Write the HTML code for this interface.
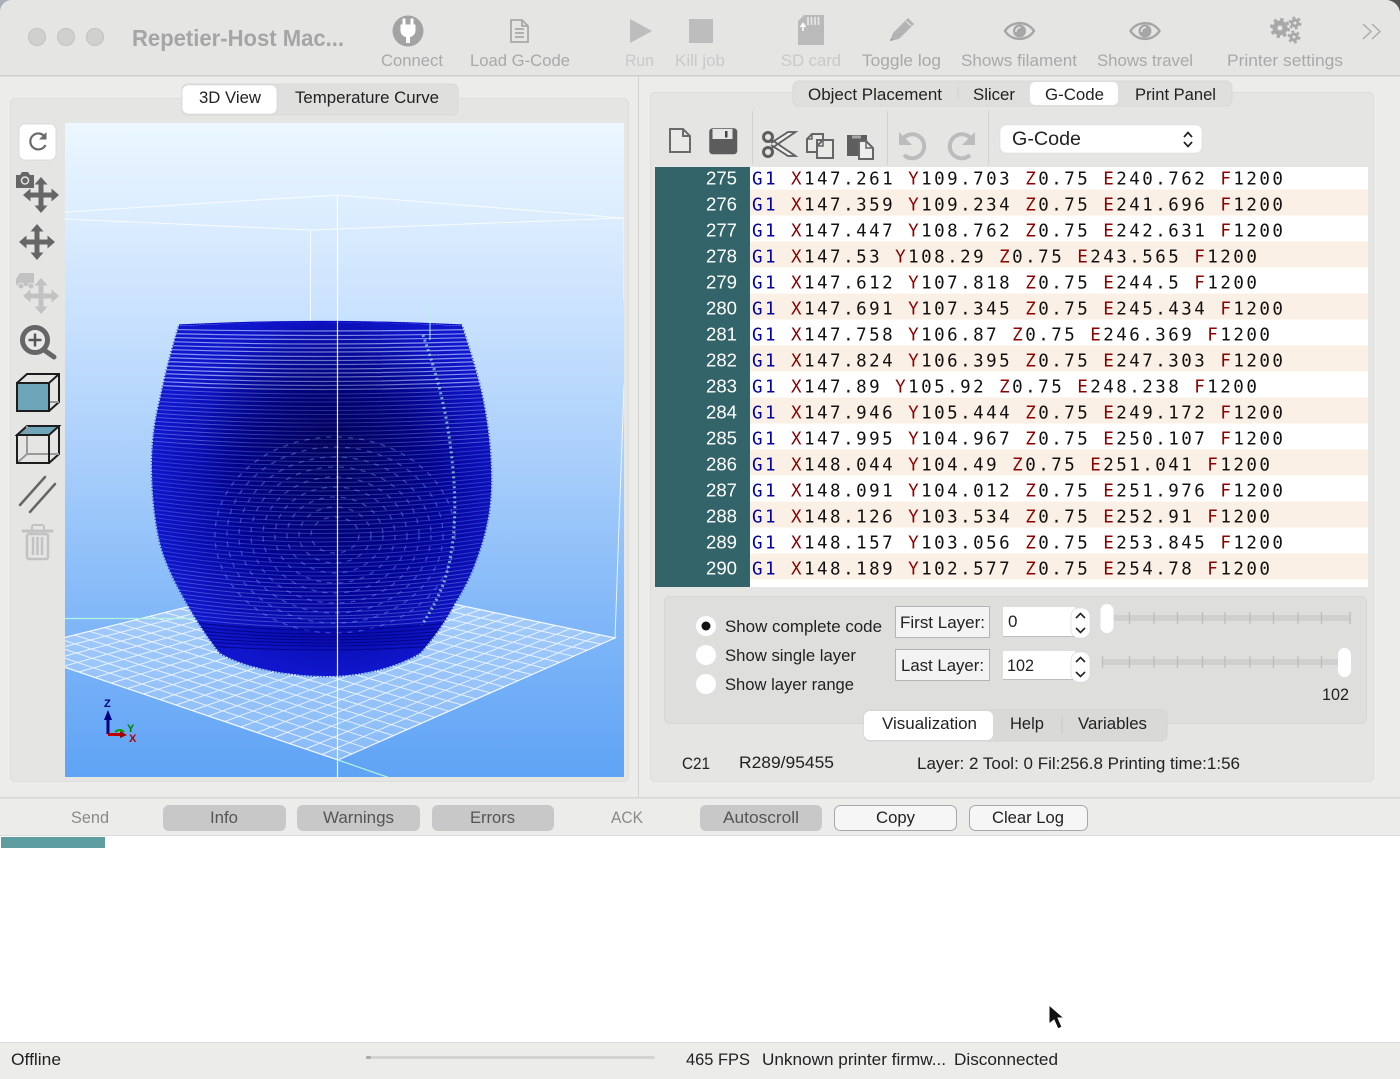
<!DOCTYPE html>
<html><head><meta charset="utf-8"><title>Repetier-Host Mac</title>
<style>
html,body{margin:0;padding:0;background:#ececea;width:1400px;height:1079px;overflow:hidden}
svg{display:block}
text{font-family:"Liberation Sans",Arial,sans-serif;font-size:17px;fill:#222}
.t{fill:#a9a9a9;font-size:17px}
.l{fill:#c9c9c9;font-size:17px}
.c text{font-family:"DejaVu Sans Mono","Liberation Mono",monospace;font-size:17.5px;letter-spacing:2.47px;fill:#111}
.c .b{fill:#0000a0}.c .r{fill:#8b0000}
.n text{font-size:18.5px;fill:#fff}
</style></head><body>
<svg width="1400" height="1079" viewBox="0 0 1400 1079" xmlns="http://www.w3.org/2000/svg">
<defs>
<linearGradient id="gl" x1="0" y1="0" x2="0" y2="1"><stop offset="0" stop-color="#ecf7ff"/><stop offset=".25" stop-color="#cfe5fe"/><stop offset=".5" stop-color="#abd0fb"/><stop offset=".75" stop-color="#82b8f8"/><stop offset="1" stop-color="#5fa3f5"/></linearGradient>
<radialGradient id="vb" gradientUnits="userSpaceOnUse" cx="335" cy="490" r="185"><stop offset="0" stop-color="#02027c"/><stop offset=".55" stop-color="#030396"/><stop offset="1" stop-color="#1016cc"/></radialGradient>
<radialGradient id="vd" gradientUnits="userSpaceOnUse" cx="330" cy="445" r="130"><stop offset="0" stop-color="#000040" stop-opacity=".6"/><stop offset="1" stop-color="#000040" stop-opacity="0"/></radialGradient>
<clipPath id="vc"><path d="M179 326Q320 318 462 326C468 345 478 375 483 400C489 430 492 460 491 490C490 515 485 535 478 555C470 578 463 590 455 603C445 622 432 640 420 653C395 668 360 676 327 676C290 676 245 668 220 653C208 638 196 620 185 600C175 582 168 568 162 550C155 525 152 495 152 467C152 440 155 420 160 400C165 375 173 345 179 326Z"/></clipPath>
<clipPath id="gv"><rect x="65" y="123" width="559" height="654"/></clipPath>
<path id="mv" d="M0-18L6.500-10.500H2.500V-2.500H10.500V-6.500L18 0L10.500 6.500V2.500H2.500V10.500H6.500L0 18L-6.500 10.500H-2.500V2.500H-10.500V6.500L-18 0L-10.500-6.500V-2.500H-2.500V-10.500H-6.500Z"/>
<g id="eye"><path d="M-14.500 0C-8-10.500 8-10.500 14.500 0C8 10.500-8 10.500-14.500 0Z" fill="none" stroke="#a6a6a6" stroke-width="2.400"/><circle r="6.500" fill="#a6a6a6"/><path d="M-3.500 1A4 4 0 0 1 1-3.500" fill="none" stroke="#e5e5e3" stroke-width="1.600"/></g>
</defs>

<!-- window -->
<rect width="1400" height="1079" fill="#ececea"/>
<path d="M0 0H12A12 12 0 0 0 0 12Z" fill="#a9b0b8"/><path d="M1400 0H1386A14 14 0 0 1 1400 14Z" fill="#555"/>
<path d="M0 14A14 14 0 0 1 14 0H1386A14 14 0 0 1 1400 14V75H0Z" fill="#e5e5e3"/>
<rect y="75" width="1400" height="1.500" fill="#cfcfcd"/>
<rect x="638" y="76" width="1" height="721" fill="#d2d2d0"/>

<!-- title bar -->
<g fill="#d0d0ce" stroke="#c2c2c0"><circle cx="37" cy="37" r="8.500"/><circle cx="66" cy="37" r="8.500"/><circle cx="95" cy="37" r="8.500"/></g>
<text x="132" y="46" style="font-size:23px;fill:#a5a5a5;font-weight:700" textLength="212" lengthAdjust="spacingAndGlyphs">Repetier-Host Mac...</text>
<circle cx="408" cy="31" r="15.500" fill="#a3a3a3"/>
<path d="M402.500 18.500h3v6h5v-6h3v6h2v6c0 4-3 6-5.500 6.500v6h-4v-6c-2.500-.5-5.500-2.500-5.500-6.500v-6h2z" fill="#fff"/>
<path d="M511 20h11l6 6v16h-17z M522 20v6h6 M515 29h9M515 33h9M515 37h9" fill="none" stroke="#a8a8a8" stroke-width="1.800"/>
<path d="M630 19L652 31L630 43Z" fill="#bdbdbd"/>
<rect x="689" y="19" width="24" height="24" fill="#bdbdbd"/>
<path d="M804 15H824V45H798V21Z" fill="#bababa"/><path d="M808 17v8M811.500 17v8M815 17v8M818.500 17v8" stroke="#e5e5e3" stroke-width="1.800"/><path d="M803 31v-6M800.500 27l2.500-3.500l2.500 3.500" fill="#fff" stroke="#fff" stroke-width="1.500"/>
<path d="M890 41L893 33L908 18L914 24L899 39Z" fill="#b3b3b3"/><path d="M890 41l1-2.500l1.500 1.500z" fill="#888"/><path d="M906 21l5 5" stroke="#e5e5e3" stroke-width="1.200"/>
<use href="#eye" x="1019.500" y="31"/><use href="#eye" x="1145" y="31"/>
<g fill="none" stroke="#a8a8a8"><circle cx="1280" cy="28" r="5" stroke-width="5"/><circle cx="1280" cy="28" r="8.500" stroke-width="3" stroke-dasharray="3.300 3.370"/><circle cx="1295" cy="23" r="3" stroke-width="3"/><circle cx="1295" cy="23" r="5.500" stroke-width="2" stroke-dasharray="2.900 2.860"/><circle cx="1294" cy="37" r="3" stroke-width="3"/><circle cx="1294" cy="37" r="5.500" stroke-width="2" stroke-dasharray="2.900 2.860"/></g>
<path d="M1363 24l8 7.500l-8 7.500M1372 24l8 7.500l-8 7.500" fill="none" stroke="#aeaeae" stroke-width="1.500"/>
<text class="t" x="381" y="66" textLength="62" lengthAdjust="spacingAndGlyphs">Connect</text>
<text class="t" x="470" y="66" textLength="100" lengthAdjust="spacingAndGlyphs">Load G-Code</text>
<text class="l" x="625" y="66" textLength="29" lengthAdjust="spacingAndGlyphs">Run</text>
<text class="l" x="675" y="66" textLength="50" lengthAdjust="spacingAndGlyphs">Kill job</text>
<text class="l" x="781" y="66" textLength="60" lengthAdjust="spacingAndGlyphs">SD card</text>
<text class="t" x="862" y="66" textLength="79" lengthAdjust="spacingAndGlyphs">Toggle log</text>
<text class="t" x="961" y="66" textLength="116" lengthAdjust="spacingAndGlyphs">Shows filament</text>
<text class="t" x="1097" y="66" textLength="96" lengthAdjust="spacingAndGlyphs">Shows travel</text>
<text class="t" x="1227" y="66" textLength="116" lengthAdjust="spacingAndGlyphs">Printer settings</text>

<!-- left panel -->
<rect x="10.500" y="98.500" width="618" height="683" rx="5" fill="#e5e5e3" stroke="#dddddb"/>
<rect x="182" y="84" width="276" height="31" rx="6" fill="#dfdfdd" stroke="#d8d8d6"/>
<rect x="182" y="85" width="95" height="29" rx="6" fill="#fff" stroke="#cfcfcf" stroke-width=".6"/>
<text x="199" y="103" textLength="62" lengthAdjust="spacingAndGlyphs">3D View</text>
<text x="295" y="103" textLength="144" lengthAdjust="spacingAndGlyphs">Temperature Curve</text>

<!-- 3D view -->
<rect x="65" y="123" width="559" height="654" fill="url(#gl)"/>
<g clip-path="url(#gv)">
<path d="M14 650L316 575L615 638L338 760Z" fill="#fff" fill-opacity=".26"/>
<path fill="none" stroke="#fff" stroke-opacity=".75" stroke-width="1" d="M30.200 655.500L331 578.200M46.400 661L345.900 581.300M62.600 666.500L360.900 584.500M78.800 672L375.800 587.600M95 677.500L390.800 590.800M111.200 683L405.700 593.900M127.400 688.500L420.700 597.100M143.600 694L435.600 600.200M159.800 699.500L450.600 603.400M176 705L465.500 606.500M192.200 710.500L480.500 609.700M208.400 716L495.400 612.800M224.600 721.500L510.400 616M240.800 727L525.300 619.100M257 732.500L540.300 622.300M273.200 738L555.200 625.400M289.400 743.500L570.200 628.600M305.600 749L585.100 631.700M321.800 754.500L600.100 634.900M29.100 646.300L351.900 753.900M44.200 642.500L365.700 747.800M59.300 638.800L379.600 741.700M74.400 635L393.400 735.600M89.500 631.300L407.300 729.500M104.600 627.500L421.100 723.400M119.700 623.800L435 717.300M134.800 620L448.800 711.200M149.900 616.300L462.700 705.100M165 612.500L476.500 699M180.100 608.800L490.400 692.900M195.200 605L504.200 686.800M210.300 601.300L518.100 680.700M225.400 597.500L531.900 674.600M240.500 593.800L545.800 668.500M255.600 590L559.600 662.400M270.700 586.300L573.500 656.300M285.800 582.500L587.300 650.200M300.900 578.800L601.200 644.100"/>
<path fill="none" stroke="#fff" stroke-opacity=".9" stroke-width="1.200" d="M14 650L338 760L615 638L316 575Z"/>
<path fill="none" stroke="#fff" stroke-opacity=".8" d="M65 212L337.500 195L624 218M65 219L310.500 230L624 218M310.500 230V330M624 218V300M624 385L615 638"/>
<path fill="none" stroke="#b4f5e0" stroke-width="1.200" d="M65 618.500H200M338 760L390 778"/>
</g>
<!-- vase -->
<path d="M179 326Q320 318 462 326C468 345 478 375 483 400C489 430 492 460 491 490C490 515 485 535 478 555C470 578 463 590 455 603C445 622 432 640 420 653C395 668 360 676 327 676C290 676 245 668 220 653C208 638 196 620 185 600C175 582 168 568 162 550C155 525 152 495 152 467C152 440 155 420 160 400C165 375 173 345 179 326Z" fill="none" stroke="#1218cc" stroke-width="2.500" stroke-dasharray="1 2.200" opacity=".8"/>
<g clip-path="url(#vc)">
<rect x="150" y="315" width="345" height="365" fill="url(#vb)"/>
<g fill="none" stroke="#b4c8ff" stroke-width="1.200" opacity=".72">
<path d="M150 329q170 4 345 0M150 333q170 5 345 0M150 337q170 5 345 0M150 341q170 6 345 0M150 345q170 6 345 0M150 349q170 6 345 0M150 353q170 7 345 0M150 357q170 7 345 0M150 361q170 7 345 0M150 365q170 8 345 0M150 369q170 8 345 0M150 373q170 8 345 0M150 377q170 9 345 0M150 381q170 9 345 0M150 385q170 9 345 0"/>
</g>
<g fill="none" stroke="#a0b8ff" stroke-width="1" opacity=".42">
<path d="M150 389q170 10 345 0M150 393q170 10 345 0M150 397q170 10 345 0M150 401q170 11 345 0M150 405q170 11 345 0M150 409q170 11 345 0M150 413q170 12 345 0M150 417q170 12 345 0M150 421q170 12 345 0M150 425q170 13 345 0M150 429q170 13 345 0M150 433q170 13 345 0M150 437q170 14 345 0M150 441q170 14 345 0"/>
</g>
<rect x="150" y="315" width="345" height="365" fill="url(#vd)"/>
<g fill="none" stroke="#6d8cf5" stroke-width="1" opacity=".36">
<path d="M150 445q170 16 345 0M150 449q170 16 345 0M150 453q170 17 345 0M150 457q170 17 345 0M150 461q170 18 345 0M150 465q170 18 345 0M150 469q170 19 345 0M150 473q170 19 345 0M150 477q170 20 345 0M150 481q170 20 345 0M150 485q170 21 345 0M150 489q170 21 345 0M150 493q170 22 345 0M150 497q170 22 345 0M150 501q170 23 345 0M150 505q170 23 345 0M150 509q170 24 345 0M150 513q170 24 345 0M150 517q170 25 345 0M150 521q170 25 345 0M150 525q170 26 345 0M150 529q170 26 345 0M150 533q170 27 345 0M150 537q170 27 345 0M150 541q170 28 345 0M150 545q170 28 345 0M150 549q170 29 345 0M150 553q170 29 345 0M150 557q170 30 345 0M150 561q170 30 345 0"/>
</g>
<g fill="none" stroke="#8aa2ff" stroke-width="1.200" opacity=".42" stroke-dasharray="5 6">
<ellipse cx="335" cy="535" rx="24" ry="18"/><ellipse cx="335" cy="535" rx="36" ry="28"/><ellipse cx="335" cy="535" rx="48" ry="38"/><ellipse cx="335" cy="535" rx="60" ry="48"/><ellipse cx="335" cy="535" rx="72" ry="58"/><ellipse cx="335" cy="535" rx="84" ry="68"/><ellipse cx="335" cy="535" rx="96" ry="78"/><ellipse cx="335" cy="535" rx="108" ry="88"/><ellipse cx="335" cy="535" rx="120" ry="98"/>
</g>
<g fill="none" stroke="#8da5f8" stroke-width="1" opacity=".38">
<path d="M150 565q170 30 345 0M150 569q170 30 345 0M150 573q170 30 345 0M150 577q170 30 345 0M150 581q170 30 345 0M150 585q170 30 345 0M150 589q170 30 345 0M150 593q170 30 345 0M150 597q170 30 345 0M150 601q170 30 345 0M150 605q170 28 345 0M150 609q170 28 345 0M150 613q170 28 345 0"/>
</g>
<g fill="none" stroke="#000070" stroke-width="1.100" opacity=".7">
<path d="M150 617q170 26 345 0M150 621q170 26 345 0M150 625q170 24 345 0M150 629q170 22 345 0M150 633q170 20 345 0M150 637q170 18 345 0M150 641q170 18 345 0"/>
</g>
<path d="M423 335C435 370 448 410 453 470C458 520 452 560 443 585C436 602 430 612 422 625" fill="none" stroke="#a5f0d8" stroke-width="3" stroke-dasharray="2 3" opacity=".7"/>
</g>
<path d="M179 325Q320 318 462 325" fill="none" stroke="#0a0ac8" stroke-width="1.200"/>
<path d="M337.500 195V778" stroke="#fff" stroke-opacity=".9" stroke-width="1.200"/>
<path d="M430 306V340" stroke="#b4f5e0" stroke-width="1"/>
<!-- axes -->
<path d="M108 734V716" stroke="#000080" stroke-width="3"/><path d="M104 720L108 710L112 720Z" fill="#000080"/>
<path d="M108 734.500H122" stroke="#c00000" stroke-width="3"/><path d="M120 731L127 735L120 738Z" fill="#a00000"/>
<path d="M115 732q5-4 9 0" fill="none" stroke="#00a000" stroke-width="2"/>
<text x="104" y="707" style="font-size:11px;fill:#000080;font-weight:700">Z</text>
<text x="127" y="732" style="font-size:11px;fill:#008000;font-weight:700">Y</text>
<text x="129" y="742" style="font-size:11px;fill:#b00000;font-weight:700">X</text>

<!-- left tools -->
<rect x="19" y="124" width="37" height="36" rx="6" fill="#fff" stroke="#d5d5d5" stroke-width=".8"/>
<path d="M45 137A8 8 0 1 0 45.500 145" fill="none" stroke="#6a6a6a" stroke-width="2.200"/><path d="M46.500 132v7.500h-7.500z" fill="#6a6a6a"/>
<use href="#mv" x="41" y="195" fill="#666"/>
<path d="M16 175h4l2-3h6l2 3h4v13h-18z" fill="#666"/><circle cx="25" cy="180.500" r="3.500" fill="none" stroke="#e5e5e3" stroke-width="1.500"/>
<use href="#mv" x="37" y="242" fill="#666"/>
<use href="#mv" x="41" y="296" fill="#c2c2c2"/>
<path d="M24 273h10v13H20c-2 0-4-.5-4-3v-4l4-6h4z" fill="#c2c2c2"/><circle cx="21" cy="286" r="3" fill="#c2c2c2" stroke="#e5e5e3"/><circle cx="31" cy="286" r="3" fill="#c2c2c2" stroke="#e5e5e3"/>
<circle cx="35" cy="340" r="12.500" fill="#e9e9e7" stroke="#666" stroke-width="5"/><path d="M44 350L54 357" stroke="#666" stroke-width="5" stroke-linecap="round"/><path d="M28.500 340h13M35 333.500v13" stroke="#555" stroke-width="2.500"/>
<g stroke="#1d1d1d" stroke-width="2" fill="none">
<path d="M17 383L27 374H59V402L49 411M59 374L49 383" /><path d="M49 402H59" stroke="#999"/><rect x="17" y="383" width="32" height="28" fill="#6ea5b9"/>
<path d="M17 435L27 426H59L49 435Z" fill="#6ea5b9"/><path d="M59 426V454L49 463"/><path d="M27 426V454H59M27 454L17 463" stroke="#999"/><rect x="17" y="435" width="32" height="28"/>
</g>
<path d="M20 505L45 477M30 512L55 484" stroke="#666" stroke-width="2.500" stroke-linecap="round"/>
<path d="M23 531h29" stroke="#c2c2c2" stroke-width="3" stroke-linecap="round"/><path d="M32 530v-3a2 2 0 0 1 2-2h8a2 2 0 0 1 2 2v3" fill="none" stroke="#c2c2c2" stroke-width="2"/><rect x="27" y="534" width="21" height="25" rx="2" fill="none" stroke="#c2c2c2" stroke-width="2.500"/><path d="M33 537v18M37.500 537v18M42 537v18" stroke="#c2c2c2" stroke-width="2.500"/>

<!-- right panel -->
<rect x="650.500" y="92.500" width="723" height="689" rx="5" fill="#e5e5e3" stroke="#dddddb"/>
<rect x="793" y="81" width="439" height="25" rx="6" fill="#dfdfdd" stroke="#d8d8d6"/>
<rect x="1030" y="82" width="88" height="23" rx="5" fill="#fff"/>
<path d="M958 87v12" stroke="#cfcfcd"/>
<text x="808" y="100" textLength="134" lengthAdjust="spacingAndGlyphs">Object Placement</text>
<text x="973" y="100" textLength="42" lengthAdjust="spacingAndGlyphs">Slicer</text>
<text x="1045" y="100" textLength="59" lengthAdjust="spacingAndGlyphs">G-Code</text>
<text x="1135" y="100" textLength="81" lengthAdjust="spacingAndGlyphs">Print Panel</text>

<path d="M752.500 111v54M887.500 111v54M988.500 111v54" stroke="#d2d2d0"/>
<path d="M670 129h13l7 7v16h-20zM683 129v7h7" fill="#e9e9e7" stroke="#6a6a6a" stroke-width="2"/>
<rect x="710" y="129" width="26.500" height="24.500" rx="2.500" fill="#5c5c5c" stroke="#5c5c5c" stroke-width="1.500"/><rect x="712.500" y="129" width="20" height="10" fill="#e6e6e6"/><rect x="725" y="131" width="2.500" height="6.500" fill="#444"/>
<g fill="none" stroke="#5e5e5e"><path d="M772 140L795.500 156L788 156L771 145M772 148L795.500 132L788 132L771 143" stroke-width="1.800" fill="#eee"/><circle cx="768" cy="137" r="4.500" stroke-width="3"/><circle cx="768" cy="152" r="4.500" stroke-width="3"/></g>
<path d="M812 134H823V140H817V152H807V139Z" fill="#e9e9e7" stroke="#666" stroke-width="2"/><path d="M823 140H833V158H817V146Z" fill="#e9e9e7" stroke="#666" stroke-width="2"/><path d="M812 134V139H807M823 140V146H817" fill="none" stroke="#666" stroke-width="1.500"/>
<rect x="847" y="135" width="20" height="21" fill="#5e5e5e"/><rect x="852" y="135.500" width="9" height="3" fill="#a8a8a8"/><path d="M859 141H866L873 148V159H859Z" fill="#eee" stroke="#666" stroke-width="2"/><path d="M866 141V148H873" fill="none" stroke="#666" stroke-width="1.500"/>
<g fill="none" stroke="#bcbcbc" stroke-width="4"><path d="M902 140A12 12 0 1 1 904 155"/><path d="M972 140A12 12 0 1 0 970 155"/></g>
<path d="M899 132v13h13zM975 132v13h-13z" fill="#bcbcbc"/>
<rect x="1000" y="125" width="202" height="28" rx="6" fill="#fff" stroke="#d9d9d9" stroke-width=".6"/>
<text x="1012" y="145" style="font-size:19px" textLength="69" lengthAdjust="spacingAndGlyphs">G-Code</text>
<path d="M1184 137l4-4.500l4 4.500M1184 142l4 4.500l4-4.500" fill="none" stroke="#222" stroke-width="1.700"/>

<!-- code editor -->
<rect x="655" y="167" width="95" height="420" fill="#33646a"/>
<rect x="750" y="167" width="618" height="420" fill="#fff"/>
<g fill="#faf0e6"><rect x="750" y="189.500" width="618" height="26"/><rect x="750" y="241.500" width="618" height="26"/><rect x="750" y="293.500" width="618" height="26"/><rect x="750" y="345.500" width="618" height="26"/><rect x="750" y="397.500" width="618" height="26"/><rect x="750" y="449.500" width="618" height="26"/><rect x="750" y="501.500" width="618" height="26"/><rect x="750" y="553.500" width="618" height="26"/></g>
<g class="n">
<text x="706" y="184.500" textLength="31" lengthAdjust="spacingAndGlyphs">275</text><text x="706" y="210.500" textLength="31" lengthAdjust="spacingAndGlyphs">276</text><text x="706" y="236.500" textLength="31" lengthAdjust="spacingAndGlyphs">277</text><text x="706" y="262.500" textLength="31" lengthAdjust="spacingAndGlyphs">278</text><text x="706" y="288.500" textLength="31" lengthAdjust="spacingAndGlyphs">279</text><text x="706" y="314.500" textLength="31" lengthAdjust="spacingAndGlyphs">280</text><text x="706" y="340.500" textLength="31" lengthAdjust="spacingAndGlyphs">281</text><text x="706" y="366.500" textLength="31" lengthAdjust="spacingAndGlyphs">282</text><text x="706" y="392.500" textLength="31" lengthAdjust="spacingAndGlyphs">283</text><text x="706" y="418.500" textLength="31" lengthAdjust="spacingAndGlyphs">284</text><text x="706" y="444.500" textLength="31" lengthAdjust="spacingAndGlyphs">285</text><text x="706" y="470.500" textLength="31" lengthAdjust="spacingAndGlyphs">286</text><text x="706" y="496.500" textLength="31" lengthAdjust="spacingAndGlyphs">287</text><text x="706" y="522.500" textLength="31" lengthAdjust="spacingAndGlyphs">288</text><text x="706" y="548.500" textLength="31" lengthAdjust="spacingAndGlyphs">289</text><text x="706" y="574.500" textLength="31" lengthAdjust="spacingAndGlyphs">290</text>
</g>
<g class="c">
<text x="752" y="184.500"><tspan class="b">G1</tspan> <tspan class="r">X</tspan>147.261 <tspan class="r">Y</tspan>109.703 <tspan class="r">Z</tspan>0.75 <tspan class="r">E</tspan>240.762 <tspan class="r">F</tspan>1200</text>
<text x="752" y="210.500"><tspan class="b">G1</tspan> <tspan class="r">X</tspan>147.359 <tspan class="r">Y</tspan>109.234 <tspan class="r">Z</tspan>0.75 <tspan class="r">E</tspan>241.696 <tspan class="r">F</tspan>1200</text>
<text x="752" y="236.500"><tspan class="b">G1</tspan> <tspan class="r">X</tspan>147.447 <tspan class="r">Y</tspan>108.762 <tspan class="r">Z</tspan>0.75 <tspan class="r">E</tspan>242.631 <tspan class="r">F</tspan>1200</text>
<text x="752" y="262.500"><tspan class="b">G1</tspan> <tspan class="r">X</tspan>147.53 <tspan class="r">Y</tspan>108.29 <tspan class="r">Z</tspan>0.75 <tspan class="r">E</tspan>243.565 <tspan class="r">F</tspan>1200</text>
<text x="752" y="288.500"><tspan class="b">G1</tspan> <tspan class="r">X</tspan>147.612 <tspan class="r">Y</tspan>107.818 <tspan class="r">Z</tspan>0.75 <tspan class="r">E</tspan>244.5 <tspan class="r">F</tspan>1200</text>
<text x="752" y="314.500"><tspan class="b">G1</tspan> <tspan class="r">X</tspan>147.691 <tspan class="r">Y</tspan>107.345 <tspan class="r">Z</tspan>0.75 <tspan class="r">E</tspan>245.434 <tspan class="r">F</tspan>1200</text>
<text x="752" y="340.500"><tspan class="b">G1</tspan> <tspan class="r">X</tspan>147.758 <tspan class="r">Y</tspan>106.87 <tspan class="r">Z</tspan>0.75 <tspan class="r">E</tspan>246.369 <tspan class="r">F</tspan>1200</text>
<text x="752" y="366.500"><tspan class="b">G1</tspan> <tspan class="r">X</tspan>147.824 <tspan class="r">Y</tspan>106.395 <tspan class="r">Z</tspan>0.75 <tspan class="r">E</tspan>247.303 <tspan class="r">F</tspan>1200</text>
<text x="752" y="392.500"><tspan class="b">G1</tspan> <tspan class="r">X</tspan>147.89 <tspan class="r">Y</tspan>105.92 <tspan class="r">Z</tspan>0.75 <tspan class="r">E</tspan>248.238 <tspan class="r">F</tspan>1200</text>
<text x="752" y="418.500"><tspan class="b">G1</tspan> <tspan class="r">X</tspan>147.946 <tspan class="r">Y</tspan>105.444 <tspan class="r">Z</tspan>0.75 <tspan class="r">E</tspan>249.172 <tspan class="r">F</tspan>1200</text>
<text x="752" y="444.500"><tspan class="b">G1</tspan> <tspan class="r">X</tspan>147.995 <tspan class="r">Y</tspan>104.967 <tspan class="r">Z</tspan>0.75 <tspan class="r">E</tspan>250.107 <tspan class="r">F</tspan>1200</text>
<text x="752" y="470.500"><tspan class="b">G1</tspan> <tspan class="r">X</tspan>148.044 <tspan class="r">Y</tspan>104.49 <tspan class="r">Z</tspan>0.75 <tspan class="r">E</tspan>251.041 <tspan class="r">F</tspan>1200</text>
<text x="752" y="496.500"><tspan class="b">G1</tspan> <tspan class="r">X</tspan>148.091 <tspan class="r">Y</tspan>104.012 <tspan class="r">Z</tspan>0.75 <tspan class="r">E</tspan>251.976 <tspan class="r">F</tspan>1200</text>
<text x="752" y="522.500"><tspan class="b">G1</tspan> <tspan class="r">X</tspan>148.126 <tspan class="r">Y</tspan>103.534 <tspan class="r">Z</tspan>0.75 <tspan class="r">E</tspan>252.91 <tspan class="r">F</tspan>1200</text>
<text x="752" y="548.500"><tspan class="b">G1</tspan> <tspan class="r">X</tspan>148.157 <tspan class="r">Y</tspan>103.056 <tspan class="r">Z</tspan>0.75 <tspan class="r">E</tspan>253.845 <tspan class="r">F</tspan>1200</text>
<text x="752" y="574.500"><tspan class="b">G1</tspan> <tspan class="r">X</tspan>148.189 <tspan class="r">Y</tspan>102.577 <tspan class="r">Z</tspan>0.75 <tspan class="r">E</tspan>254.78 <tspan class="r">F</tspan>1200</text>
</g>

<!-- visualization box -->
<rect x="664.500" y="596.500" width="702" height="127" rx="5" fill="#dededc" stroke="#d6d6d4"/>
<circle cx="706" cy="626" r="10" fill="#fff"/><circle cx="706" cy="626" r="4.500" fill="#111"/>
<circle cx="706" cy="655" r="10" fill="#fff"/><circle cx="706" cy="684" r="10" fill="#fff"/>
<text x="725" y="632" textLength="157" lengthAdjust="spacingAndGlyphs">Show complete code</text>
<text x="725" y="661" textLength="131" lengthAdjust="spacingAndGlyphs">Show single layer</text>
<text x="725" y="690" textLength="129" lengthAdjust="spacingAndGlyphs">Show layer range</text>
<rect x="895.500" y="606.500" width="94" height="31" fill="#f3f3f3" stroke="#b5b5b5"/>
<rect x="895.500" y="649.500" width="94" height="31" fill="#f3f3f3" stroke="#b5b5b5"/>
<text x="900" y="628" textLength="85" lengthAdjust="spacingAndGlyphs">First Layer:</text>
<text x="901" y="671" textLength="83" lengthAdjust="spacingAndGlyphs">Last Layer:</text>
<rect x="1003" y="607" width="72" height="29" fill="#fff"/><rect x="1003" y="651" width="72" height="28" fill="#fff"/>
<path d="M1003 636.500H1075M1003 679.500H1075" stroke="#bdbdbd"/>
<text x="1008" y="627">0</text><text x="1007" y="671" textLength="27" lengthAdjust="spacingAndGlyphs">102</text>
<rect x="1071" y="608" width="19" height="30" rx="8" fill="#fff" stroke="#d5d5d5" stroke-width=".6"/>
<rect x="1071" y="652" width="19" height="30" rx="8" fill="#fff" stroke="#d5d5d5" stroke-width=".6"/>
<path d="M1076 618l4.500-4.500l4.500 4.500M1076 628l4.500 4.500l4.500-4.500M1076 662l4.500-4.500l4.500 4.500M1076 672l4.500 4.500l4.500-4.500" fill="none" stroke="#222" stroke-width="1.600"/>
<rect x="1102" y="615" width="248" height="6" fill="#d0d0ce"/><rect x="1102" y="659" width="248" height="6" fill="#d0d0ce"/>
<path d="M1129.500 612v12M1154 612v12M1177.500 612v12M1202.500 612v12M1225 612v12M1250 612v12M1273.500 612v12M1298 612v12M1321.500 612v12M1350 612v12M1102.500 656v12M1129.500 656v12M1154 656v12M1177.500 656v12M1202.500 656v12M1225 656v12M1250 656v12M1273.500 656v12M1298 656v12M1321.500 656v12" stroke="#bdbdbb" stroke-width="1.300"/>
<rect x="1100.500" y="604" width="13" height="29" rx="6.500" fill="#fff"/><rect x="1338" y="648" width="13" height="29" rx="6.500" fill="#fff"/>
<text x="1322" y="700" textLength="27" lengthAdjust="spacingAndGlyphs">102</text>
<rect x="864" y="710" width="303" height="31" rx="6" fill="#d9d9d7" stroke="#d4d4d2"/>
<rect x="864" y="711" width="129" height="29" rx="6" fill="#fff"/>
<path d="M1062 717v16" stroke="#c8c8c6"/>
<text x="882" y="729" textLength="95" lengthAdjust="spacingAndGlyphs">Visualization</text>
<text x="1010" y="729" textLength="34" lengthAdjust="spacingAndGlyphs">Help</text>
<text x="1078" y="729" textLength="69" lengthAdjust="spacingAndGlyphs">Variables</text>
<text x="682" y="769" textLength="28" lengthAdjust="spacingAndGlyphs">C21</text>
<text x="739" y="768" textLength="95" lengthAdjust="spacingAndGlyphs">R289/95455</text>
<text x="917" y="769" textLength="323" lengthAdjust="spacingAndGlyphs">Layer: 2 Tool: 0 Fil:256.8 Printing time:1:56</text>

<!-- log toolbar -->
<rect y="797" width="1400" height="1.500" fill="#d6d6d4"/>
<rect y="835" width="1400" height="1" fill="#dcdcda"/>
<rect y="836" width="1400" height="206" fill="#fff"/>
<rect x="1" y="837" width="104" height="11" fill="#5f9ea0"/>
<g fill="#c8c8c8"><rect x="163" y="805" width="123" height="26" rx="6"/><rect x="297" y="805" width="123" height="26" rx="6"/><rect x="432" y="805" width="122" height="26" rx="6"/><rect x="700" y="805" width="122" height="26" rx="6"/></g>
<rect x="834.500" y="805.500" width="122" height="25" rx="6" fill="#f6f6f6" stroke="#a8a8a8"/>
<rect x="969.500" y="805.500" width="118" height="25" rx="6" fill="#f6f6f6" stroke="#a8a8a8"/>
<text x="71" y="823" style="fill:#8a8a8a" textLength="38" lengthAdjust="spacingAndGlyphs">Send</text>
<text x="210" y="823" style="fill:#555" textLength="28" lengthAdjust="spacingAndGlyphs">Info</text>
<text x="323" y="823" style="fill:#555" textLength="71" lengthAdjust="spacingAndGlyphs">Warnings</text>
<text x="470" y="823" style="fill:#555" textLength="45" lengthAdjust="spacingAndGlyphs">Errors</text>
<text x="611" y="823" style="fill:#8a8a8a" textLength="32" lengthAdjust="spacingAndGlyphs">ACK</text>
<text x="723" y="823" style="fill:#555" textLength="76" lengthAdjust="spacingAndGlyphs">Autoscroll</text>
<text x="876" y="823" textLength="39" lengthAdjust="spacingAndGlyphs">Copy</text>
<text x="992" y="823" textLength="72" lengthAdjust="spacingAndGlyphs">Clear Log</text>

<!-- status bar -->
<rect y="1042" width="1400" height="1" fill="#dcdcda"/>
<text x="11" y="1065" textLength="50" lengthAdjust="spacingAndGlyphs">Offline</text>
<rect x="366" y="1056" width="289" height="3" rx="1.500" fill="#d4d4d2"/><rect x="366" y="1056" width="5" height="3" rx="1.500" fill="#aaa"/>
<text x="686" y="1065" textLength="64" lengthAdjust="spacingAndGlyphs">465 FPS</text>
<text x="762" y="1065" textLength="184" lengthAdjust="spacingAndGlyphs">Unknown printer firmw...</text>
<text x="954" y="1065" textLength="104" lengthAdjust="spacingAndGlyphs">Disconnected</text>
<path d="M1049 1005V1024L1054 1020L1058 1029L1062 1027L1058 1018H1064Z" fill="#111" stroke="#fff" stroke-width="1"/>
</svg>
</body></html>
